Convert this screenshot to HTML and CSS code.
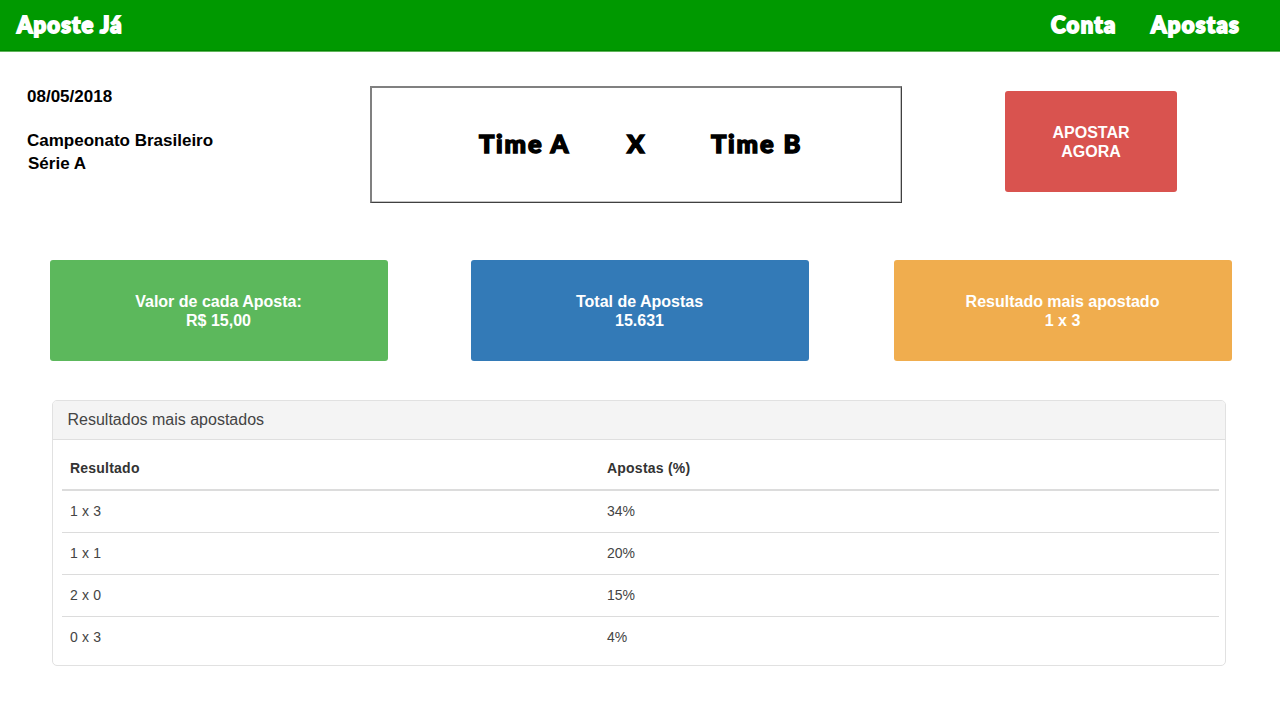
FILE: index.html
```html
<!DOCTYPE html>
<html lang="pt-BR">
<head>
<meta charset="utf-8">
<title>Aposte Já</title>
<link rel="stylesheet" href="styles.css">
</head>
<body>
<header class="navbar">
  <a class="brand">Aposte Já</a>
  <nav class="nav"><a class="conta">Conta</a><a class="apostas">Apostas</a></nav>
</header>
<main>
  <section class="match">
    <div class="info">
      <p class="date">08/05/2018</p>
      <p class="league">Campeonato Brasileiro<br><span class="serie">Série A</span></p>
    </div>
    <div class="teams"><span class="team-a">Time A</span><span class="versus">X</span><span class="team-b">Time B</span></div>
    <button class="tile bet">APOSTAR<br>AGORA</button>
  </section>
  <section class="stats">
    <div class="tile green"><span>Valor de cada Aposta:<br>R$ 15,00</span></div>
    <div class="tile blue"><span>Total de Apostas<br>15.631</span></div>
    <div class="tile orange"><span>Resultado mais apostado<br>1 x 3</span></div>
  </section>
  <section class="panel">
    <h3 class="panel-title">Resultados mais apostados</h3>
    <table class="results">
      <thead><tr><th class="first">Resultado</th><th>Apostas (%)</th></tr></thead>
      <tbody>
        <tr><td>1 x 3</td><td>34%</td></tr>
        <tr><td>1 x 1</td><td>20%</td></tr>
        <tr><td>2 x 0</td><td>15%</td></tr>
        <tr><td>0 x 3</td><td>4%</td></tr>
      </tbody>
    </table>
  </section>
</main>
</body>
</html>
```
FILE: styles.css
```css
* { box-sizing: border-box; }
body { margin: 0; height: 720px; overflow: hidden; background: #fff; color: #333; font-family: "Liberation Sans", Arial, sans-serif; }
.navbar { display: flex; justify-content: space-between; height: 52px; padding: 0 39px 0 17px; background: #009900; border-bottom: 1px solid #5fb45a; box-shadow: inset 0 -1px #008500; }
.brand, .nav { font: 900 22px/49px Lato, sans-serif; letter-spacing: 1.15px; color: #fff; -webkit-text-stroke: 1.8px #fff; white-space: nowrap; }
.nav { display: flex; gap: 36px; letter-spacing: 1.35px; }
.conta { width: 64px; }
.apostas { width: 90px; }
.match { display: flex; height: 208px; padding: 34px 103px 0 27px; }
.info { width: 343px; color: #000; font-weight: bold; font-size: 17px; line-height: 23px; }
.info p { margin: 0; }
.info .date { margin: -1px 0 21px; }
.serie { padding-left: 1px; }
.teams { display: flex; width: 532px; height: 117px; padding-left: 107px; border: 2px solid #808080; border-right: 1px solid #404040; border-bottom: 1px solid #404040; box-shadow: inset -1px -1px #c4c4c4; font: 900 25.5px/111px Lato, sans-serif; letter-spacing: 1.85px; color: #000; -webkit-text-stroke: 1.5px #000; white-space: nowrap; }
.team-a { width: 148px; }
.versus { width: 84px; }
.tile { display: flex; align-items: center; justify-content: center; height: 101px; border: 0; border-radius: 3px; color: #fff; font: bold 16px/19px "Liberation Sans", Arial, sans-serif; text-align: center; }
.bet { display: block; width: 172px; margin: 5px 0 0 103px; background: #d9534f; }
.stats { display: flex; height: 140px; padding-left: 50px; }
.stats .tile { width: 338px; padding-right: 1px; }
.green { background: #5cb85c; }
.stats .blue { margin: 0 85px 0 83px; background: #337ab7; }
.orange { background: #f0ad4e; }
.panel { width: 1174px; height: 266px; margin-left: 52px; border: 1px solid #e1e1e1; border-radius: 5px; overflow: hidden; }
.panel-title { height: 39px; margin: 0 0 6px; padding-left: 14.5px; background: #f4f4f4; border-bottom: 1px solid #dfdfdf; color: #444; font-size: 16px; font-weight: normal; line-height: 37px; }
.results { width: 1157px; margin-left: 9px; border-collapse: separate; border-spacing: 0; font-size: 14px; color: #444; }
.results th, .results td { height: 42px; padding: 0 8px 1px; text-align: left; line-height: 20px; }
.results th { height: 45px; padding: 1px 8px 0; letter-spacing: 0.22px; border-bottom: 2px solid #dcdcdc; color: #333; }
.results td { border-bottom: 1px solid #dcdcdc; }
.results td:first-child { letter-spacing: 0.15px; }
.results tr:last-child td { padding-bottom: 2px; border-bottom: 0; }
.results .first { width: 537px; }
```
